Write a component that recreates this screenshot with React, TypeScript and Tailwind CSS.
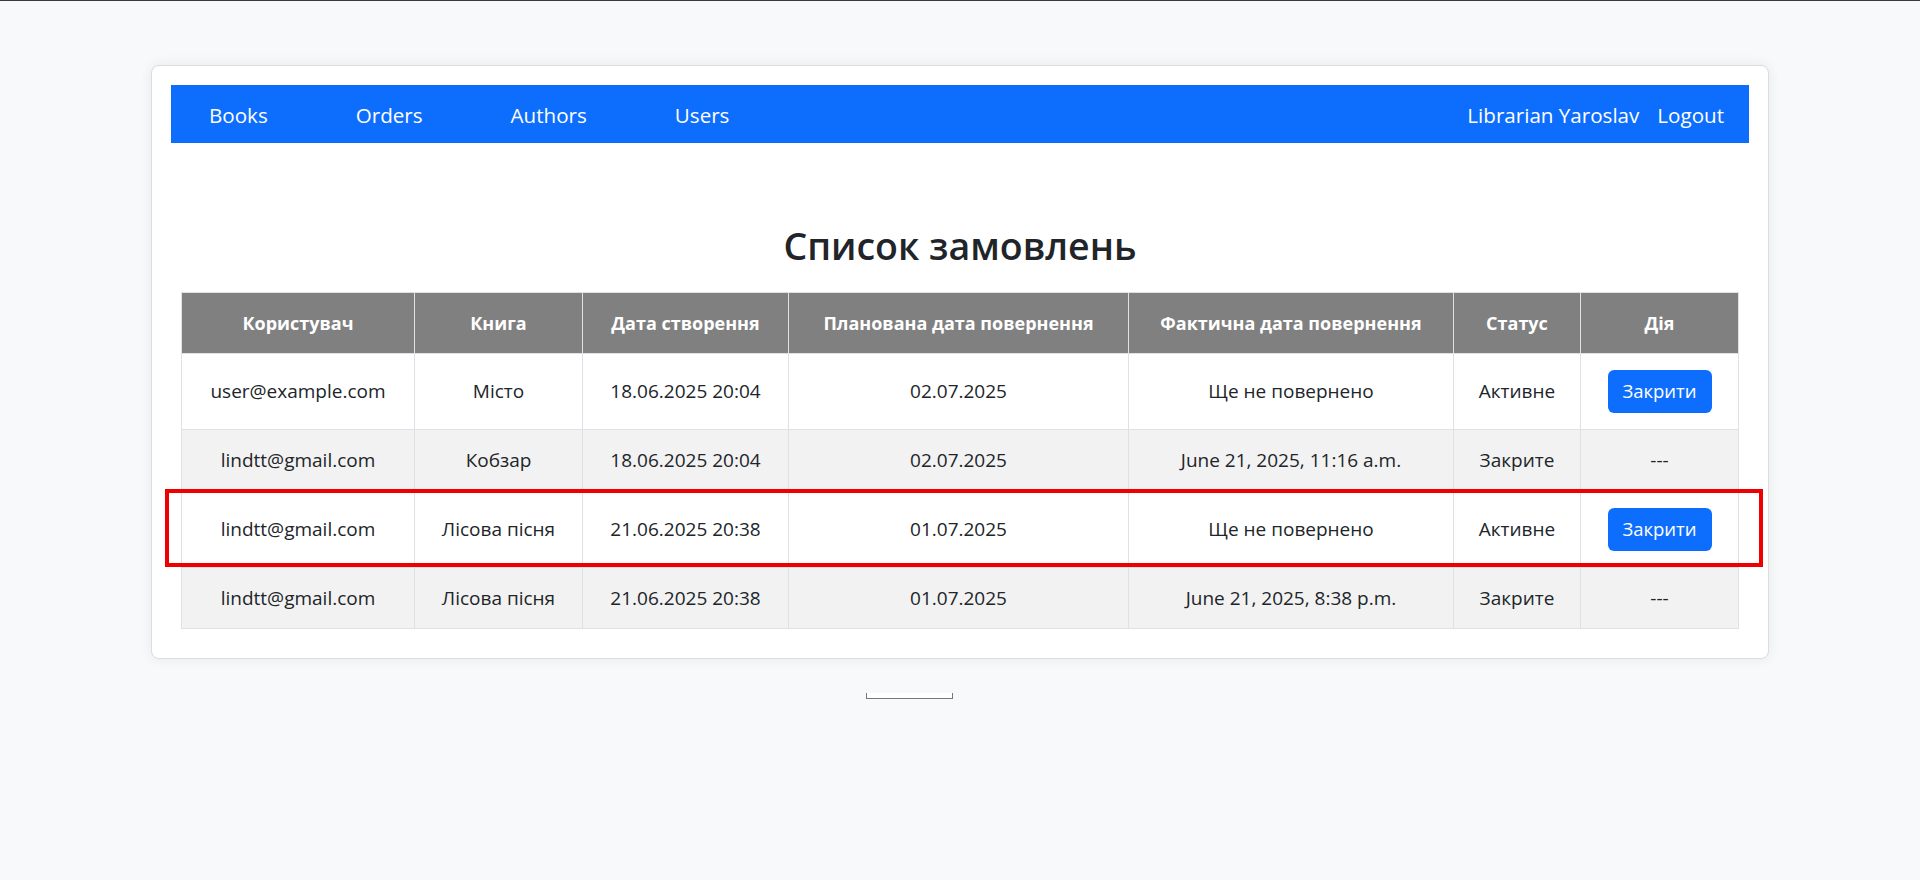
import React from "react";

interface Order {
  user: string;
  book: string;
  created: string;
  planned: string;
  actual: string;
  status: string;
  active: boolean;
}

const orders: Order[] = [
  {
    user: "user@example.com",
    book: "Місто",
    created: "18.06.2025 20:04",
    planned: "02.07.2025",
    actual: "Ще не повернено",
    status: "Активне",
    active: true,
  },
  {
    user: "lindtt@gmail.com",
    book: "Кобзар",
    created: "18.06.2025 20:04",
    planned: "02.07.2025",
    actual: "June 21, 2025, 11:16 a.m.",
    status: "Закрите",
    active: false,
  },
  {
    user: "lindtt@gmail.com",
    book: "Лісова пісня",
    created: "21.06.2025 20:38",
    planned: "01.07.2025",
    actual: "Ще не повернено",
    status: "Активне",
    active: true,
  },
  {
    user: "lindtt@gmail.com",
    book: "Лісова пісня",
    created: "21.06.2025 20:38",
    planned: "01.07.2025",
    actual: "June 21, 2025, 8:38 p.m.",
    status: "Закрите",
    active: false,
  },
];

const headers = [
  { label: "Користувач", w: "w-[233px]" },
  { label: "Книга", w: "w-[168px]" },
  { label: "Дата створення", w: "w-[206px]" },
  { label: "Планована дата повернення", w: "w-[340px]" },
  { label: "Фактична дата повернення", w: "w-[325px]" },
  { label: "Статус", w: "w-[127px]" },
  { label: "Дія", w: "w-[158px]" },
];

const navLinks = ["Books", "Orders", "Authors", "Users"];

const App: React.FC = () => {
  return (
    <div
      className="min-h-[880px] bg-[#f8f9fa] border-t border-[#3a3a3a] text-[#212529]"
      style={{ fontFamily: '"Open Sans", "Noto Sans", sans-serif' }}
    >
      <div className="pt-[64px] flex flex-col items-center">
        <div className="w-[1618px] bg-white border border-[#dcdcdc] rounded-lg shadow-[0_0_14px_rgba(0,0,0,0.07)] p-[19px]">
          {/* navbar */}
          <nav className="h-[58px] bg-[#0d6efd] flex items-center justify-between pl-[38px] pr-[25px] text-white text-[20.6px]">
            <div className="flex items-center gap-[88px] pt-[2px]">
              {navLinks.map((l) => (
                <a key={l} className="cursor-pointer">
                  {l}
                </a>
              ))}
            </div>
            <div className="flex items-center gap-[18px] pt-[2px]">
              <span>Librarian Yaroslav</span>
              <a className="cursor-pointer">Logout</a>
            </div>
          </nav>

          <h2 className="mt-[81px] mb-[24px] h-[44px] leading-[44px] text-center text-[37.5px] font-semibold text-[#212529]">
            Список замовлень
          </h2>

          <div className="px-[10px] pb-[10px]">
            <div className="relative w-[1557px]">
              <table className="border-collapse table-fixed w-[1557px] text-center">
                <thead>
                  <tr className="bg-[#808080]">
                    {headers.map((h) => (
                      <th
                        key={h.label}
                        className={`${h.w} py-[15.5px] px-2 leading-[29px] text-[18px] font-bold text-white border border-[#dee2e6]`}
                      >
                        {h.label}
                      </th>
                    ))}
                  </tr>
                </thead>
                <tbody>
                  {orders.map((o, i) => (
                    <tr key={i} className={i % 2 === 1 ? "bg-[#f2f2f2]" : "bg-white"}>
                      {[o.user, o.book, o.created, o.planned, o.actual, o.status].map((v, j) => (
                        <td
                          key={j}
                          className="py-4 px-2 text-[19px] leading-[28.5px] border border-[#dee2e6] align-middle"
                        >
                          {v}
                        </td>
                      ))}
                      <td className="py-4 px-2 text-[19px] leading-[28.5px] border border-[#dee2e6] align-middle">
                        {o.active ? (
                          <button className="w-[104px] h-[43px] rounded-[6px] bg-[#0d6efd] text-white text-[18.5px] align-middle">
                            Закрити
                          </button>
                        ) : (
                          "---"
                        )}
                      </td>
                    </tr>
                  ))}
                </tbody>
              </table>
              {/* highlight box over the third row */}
              <div className="absolute left-[-16px] top-[197px] w-[1598px] h-[78px] border-[4px] border-[#ee0000] pointer-events-none" />
            </div>
          </div>
        </div>

        <div className="mt-[34px] ml-[-101px] w-[87px] h-[6px] bg-white border border-t-0 border-[#777]" />
      </div>
    </div>
  );
};

export default App;
